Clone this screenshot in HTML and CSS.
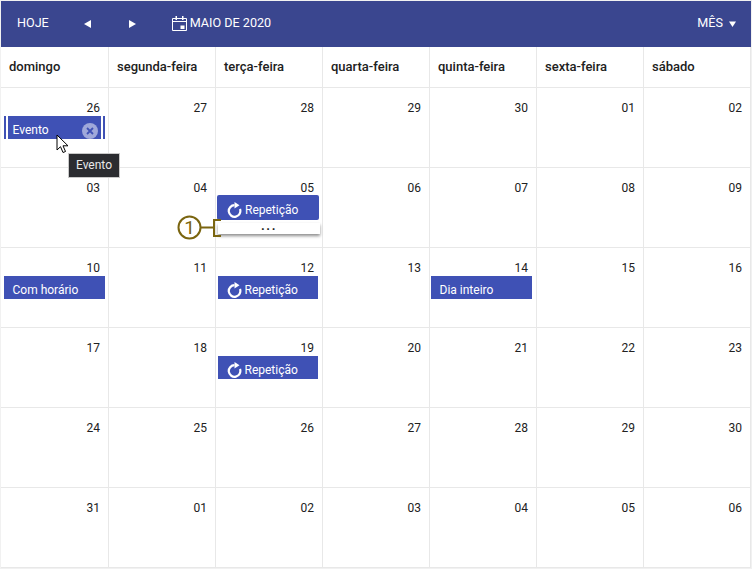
FILE: index.html
```html
<!DOCTYPE html>
<html lang="pt">
<head>
  <meta charset="UTF-8">
  <title>Agenda</title>
  <meta name="viewport" content="width=device-width, initial-scale=1.0">
  <link rel="stylesheet" href="styles.css">
</head>
<body>

<div class="calendar">
  <header class="toolbar">
    <span class="tool-btn today">HOJE</span>
    <svg class="arrow prev" width="7" height="8" viewBox="0 0 7 8"><path d="M7 0v8L0 4z" fill="#fff"/></svg>
    <svg class="arrow next" width="7" height="8" viewBox="0 0 7 8"><path d="M0 0v8l7-4z" fill="#fff"/></svg>
    <div class="period">
      <svg class="period-icon" width="15" height="15" viewBox="0 0 15 15">
        <path d="M.5 2.500h14v12H.5zM.5 5.500h14" fill="none" stroke="#fff"/>
        <path d="M3.500 0H5v4H3.500zM10 0h1.500v4H10zM8.500 9.500h4v3.500h-4z" fill="#fff"/>
      </svg>
      <span>MAIO DE 2020</span>
    </div>
    <div class="view-select">
      <span>MÊS</span>
      <svg width="7" height="6" viewBox="0 0 7 6"><path d="M0 .5h7L3.500 6z" fill="#fff"/></svg>
    </div>
  </header>

  <div class="week-head">
    <div class="head-cell">domingo</div>
    <div class="head-cell">segunda-feira</div>
    <div class="head-cell">terça-feira</div>
    <div class="head-cell">quarta-feira</div>
    <div class="head-cell">quinta-feira</div>
    <div class="head-cell">sexta-feira</div>
    <div class="head-cell">sábado</div>
  </div>

  <div class="month-grid">
    <div class="day">
      <div class="date">26</div>
      <div class="event selected">
        <span>Evento</span>
        <svg class="close" width="16" height="16" viewBox="0 0 16 16">
          <circle cx="8" cy="8" r="8" fill="#9fa8da"/>
          <path d="M5 5l6 6M11 5l-6 6" stroke="#3f51b5" stroke-width="1.800"/>
        </svg>
      </div>
    </div>
    <div class="day"><div class="date">27</div></div>
    <div class="day"><div class="date">28</div></div>
    <div class="day"><div class="date">29</div></div>
    <div class="day"><div class="date">30</div></div>
    <div class="day"><div class="date">01</div></div>
    <div class="day"><div class="date">02</div></div>

    <div class="day"><div class="date">03</div></div>
    <div class="day"><div class="date">04</div></div>
    <div class="day">
      <div class="date">05</div>
      <div class="event repeat open">
        <svg class="repeat-icon" width="15" height="16" viewBox="0 0 15 16"><path d="M13 7A5.800 5.800 0 1 1 7.500 3.200" fill="none" stroke="#fff" stroke-width="2.200"/><path d="M7.500 0l5 3.200-5 3.300z" fill="#fff"/></svg>
        <span>Repetição</span>
      </div>
      <div class="more">...</div>
    </div>
    <div class="day"><div class="date">06</div></div>
    <div class="day"><div class="date">07</div></div>
    <div class="day"><div class="date">08</div></div>
    <div class="day"><div class="date">09</div></div>

    <div class="day">
      <div class="date">10</div>
      <div class="event wide"><span>Com horário</span></div>
    </div>
    <div class="day"><div class="date">11</div></div>
    <div class="day">
      <div class="date">12</div>
      <div class="event repeat">
        <svg class="repeat-icon" width="15" height="16" viewBox="0 0 15 16"><path d="M13 7A5.800 5.800 0 1 1 7.500 3.200" fill="none" stroke="#fff" stroke-width="2.200"/><path d="M7.500 0l5 3.200-5 3.300z" fill="#fff"/></svg>
        <span>Repetição</span>
      </div>
    </div>
    <div class="day"><div class="date">13</div></div>
    <div class="day">
      <div class="date">14</div>
      <div class="event allday"><span>Dia inteiro</span></div>
    </div>
    <div class="day"><div class="date">15</div></div>
    <div class="day"><div class="date">16</div></div>

    <div class="day"><div class="date">17</div></div>
    <div class="day"><div class="date">18</div></div>
    <div class="day">
      <div class="date">19</div>
      <div class="event repeat">
        <svg class="repeat-icon" width="15" height="16" viewBox="0 0 15 16"><path d="M13 7A5.800 5.800 0 1 1 7.500 3.200" fill="none" stroke="#fff" stroke-width="2.200"/><path d="M7.500 0l5 3.200-5 3.300z" fill="#fff"/></svg>
        <span>Repetição</span>
      </div>
    </div>
    <div class="day"><div class="date">20</div></div>
    <div class="day"><div class="date">21</div></div>
    <div class="day"><div class="date">22</div></div>
    <div class="day"><div class="date">23</div></div>

    <div class="day"><div class="date">24</div></div>
    <div class="day"><div class="date">25</div></div>
    <div class="day"><div class="date">26</div></div>
    <div class="day"><div class="date">27</div></div>
    <div class="day"><div class="date">28</div></div>
    <div class="day"><div class="date">29</div></div>
    <div class="day"><div class="date">30</div></div>

    <div class="day"><div class="date">31</div></div>
    <div class="day"><div class="date">01</div></div>
    <div class="day"><div class="date">02</div></div>
    <div class="day"><div class="date">03</div></div>
    <div class="day"><div class="date">04</div></div>
    <div class="day"><div class="date">05</div></div>
    <div class="day"><div class="date">06</div></div>
  </div>

  <!-- annotation, tooltip and pointer sit over the grid -->
  <svg class="callout" width="46" height="30" viewBox="0 0 46 30">
    <circle cx="12.500" cy="14.500" r="11" fill="#fff" stroke="#7a6510" stroke-width="2"/>
    <path d="M24 14.500h13M44 7h-7v16h7" fill="none" stroke="#7a6510" stroke-width="2"/>
  </svg>
  <span class="callout-num">1</span>
  <div class="tooltip">Evento</div>
  <svg class="pointer" width="14" height="20" viewBox="0 0 14 20">
    <path d="M1 1v15l3.500-3.300L7 18.500l2.500-1L7 11.800h5z" fill="#fff" stroke="#000" stroke-width="1"/>
  </svg>
</div>

</body>
</html>
```

FILE: styles.css
```css
* { box-sizing: border-box; }

body {
  margin: 0;
  background: #fff;
  font-family: Roboto, "Liberation Sans", sans-serif;
  color: #212121;
}

.calendar {
  position: relative;
  width: 752px;
  height: 569px;
  padding: 1px 1px 0 1px;
  background: #f1f1f1;
}

.toolbar {
  display: flex;
  align-items: center;
  width: 750px;
  height: 46px;
  background: #3a468f;
  color: #fff;
  font-size: 12.600px;
}

.toolbar span {
  margin-bottom: 3px;
}

.today {
  margin-left: 16px;
}

.arrow.prev {
  margin-left: 35px;
}

.arrow.next {
  margin-left: 38px;
}

.period {
  display: flex;
  align-items: center;
  gap: 3px;
  margin-left: 36px;
}

.period-icon {
  margin-bottom: 1px;
}

.view-select {
  display: flex;
  align-items: center;
  gap: 6px;
  margin-left: auto;
  margin-right: 15px;
}

.week-head,
.month-grid {
  display: grid;
  grid-template-columns: 108px repeat(6, 107px);
  width: 750px;
  background: #fff;
}

.head-cell {
  height: 41px;
  padding: 12px 8px 0;
  border-right: 1px solid #e8e8e8;
  border-bottom: 1px solid #e8e8e8;
  font-size: 13px;
  font-weight: 500;
}

.month-grid {
  grid-auto-rows: 80px;
}

.day {
  display: flex;
  flex-direction: column;
  padding: 12px 1px 0 3px;
  border-right: 1px solid #e8e8e8;
  border-bottom: 1px solid #e8e8e8;
}

.date {
  height: 16px;
  padding-right: 7px;
  text-align: right;
  font-size: 12px;
  line-height: 16px;
}

.event {
  display: flex;
  align-items: center;
  height: 23px;
  padding: 5px 0 0 8.500px;
  background: #3f51b5;
  color: #fff;
  font-size: 12px;
}

.event.selected {
  position: relative;
  width: 93px;
  margin-left: 4px;
  padding: 5px 3px 0 4.500px;
  justify-content: space-between;
}

.close {
  margin-top: 1px;
}

.event.selected::before,
.event.selected::after {
  content: "";
  position: absolute;
  top: 0;
  bottom: 0;
  width: 2px;
  background: #3f51b5;
}

.event.selected::before {
  left: -4px;
}

.event.selected::after {
  right: -4px;
}

.event.repeat {
  width: 100px;
  margin-left: -1px;
  gap: 3px;
}

.event.repeat .repeat-icon {
  flex: none;
  margin-top: 0;
}

.event.repeat.open {
  width: 102px;
  height: 25px;
  margin-left: -2px;
  margin-top: -1px;
  padding-left: 10px;
  border-radius: 2px;
}

.event.wide {
  width: 101px;
}

.event.allday {
  width: 101px;
  margin-left: -2px;
}

.more {
  width: 102px;
  height: 11px;
  margin: 3px 0 0 -1px;
  background: #fff;
  box-shadow: 0 2px 3px rgba(0, 0, 0, 0.45);
  text-align: center;
  letter-spacing: 1.500px;
  font-size: 13px;
  font-weight: 700;
  line-height: 5px;
}

.callout {
  position: absolute;
  left: 177px;
  top: 213px;
}

.callout-num {
  position: absolute;
  left: 177px;
  top: 213px;
  width: 25px;
  height: 29px;
  text-align: center;
  color: #7a6510;
  font-size: 19px;
  line-height: 29px;
}

.tooltip {
  position: absolute;
  left: 68px;
  top: 153px;
  width: 52px;
  height: 25px;
  background: #2b2c30;
  border: 1px solid #c9c9c9;
  color: #e8e8e8;
  text-align: center;
  font-size: 12px;
  line-height: 23px;
}

.pointer {
  position: absolute;
  left: 56px;
  top: 134px;
}
```
